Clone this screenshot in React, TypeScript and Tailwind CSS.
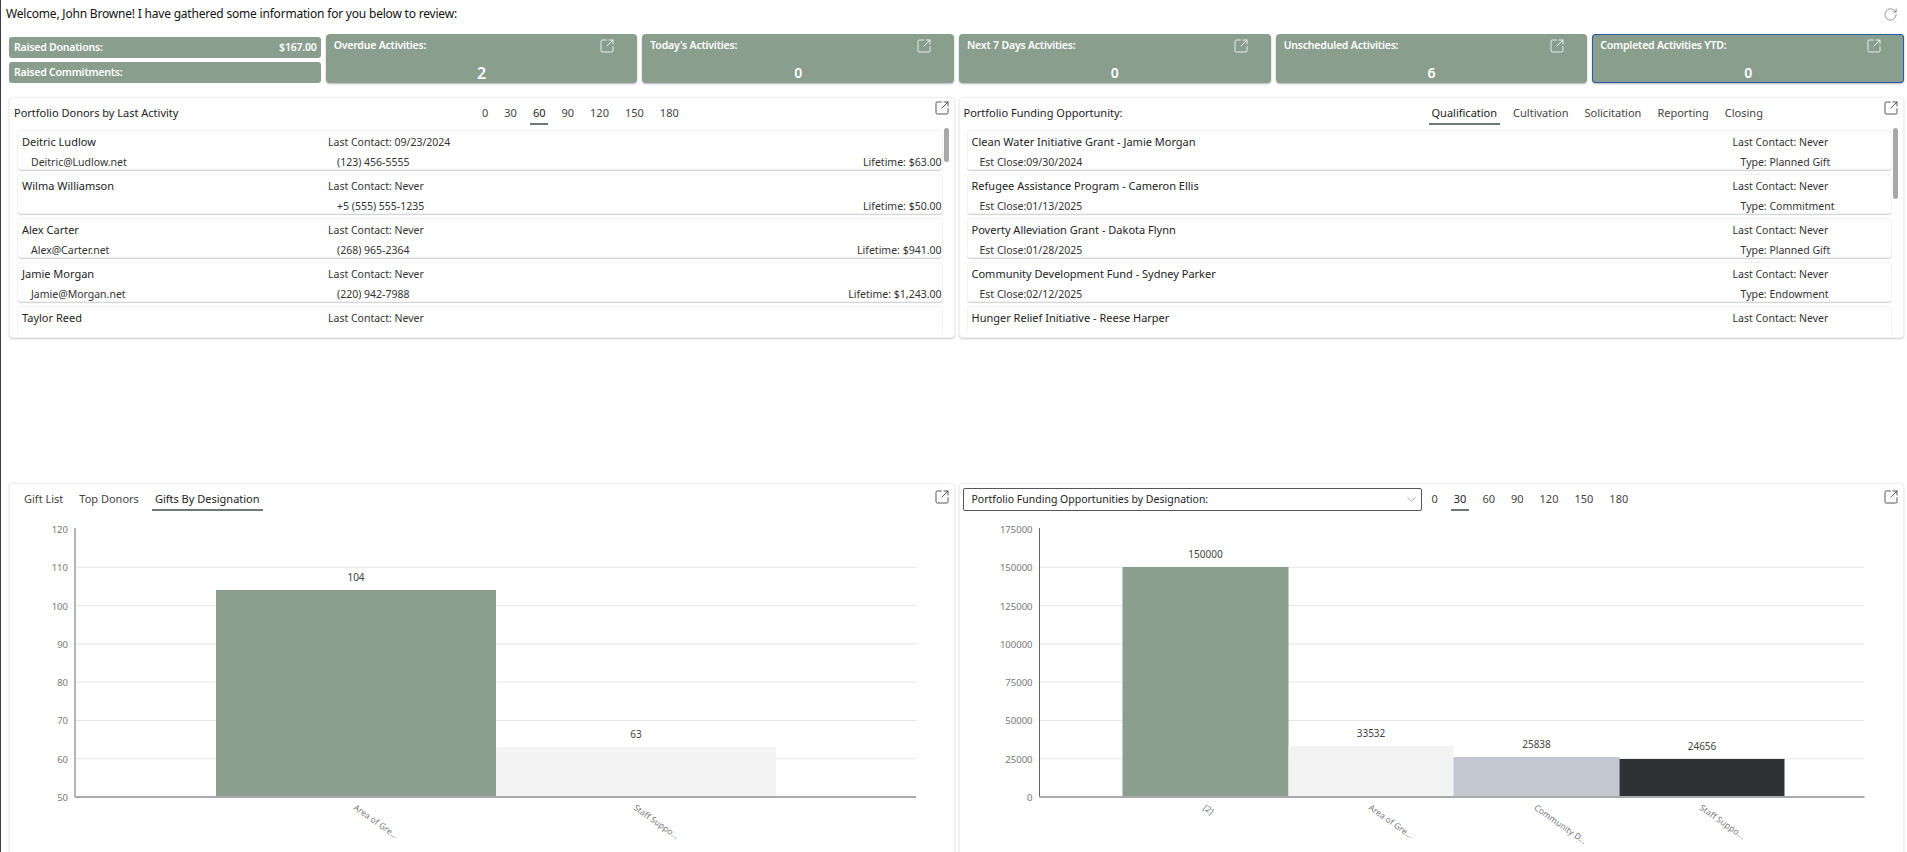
import { ChevronDown, RotateCw, SquareArrowOutUpRight } from 'lucide-react'

const activityTiles = [
  { label: 'Overdue Activities:', value: '2', big: true },
  { label: "Today's Activities:", value: '0' },
  { label: 'Next 7 Days Activities:', value: '0' },
  { label: 'Unscheduled Activities:', value: '6' },
  { label: 'Completed Activities YTD:', value: '0', focused: true },
]

const donors = [
  { name: 'Deitric Ludlow', contact: '09/23/2024', email: 'Deitric@Ludlow.net', phone: '(123) 456-5555', lifetime: '$63.00' },
  { name: 'Wilma Williamson', contact: 'Never', email: '', phone: '+5 (555) 555-1235', lifetime: '$50.00' },
  { name: 'Alex Carter', contact: 'Never', email: 'Alex@Carter.net', phone: '(268) 965-2364', lifetime: '$941.00' },
  { name: 'Jamie Morgan', contact: 'Never', email: 'Jamie@Morgan.net', phone: '(220) 942-7988', lifetime: '$1,243.00' },
  { name: 'Taylor Reed', contact: 'Never', email: '', phone: '', lifetime: '' },
]

const opportunities = [
  { name: 'Clean Water Initiative Grant - Jamie Morgan', close: '09/30/2024', type: 'Planned Gift' },
  { name: 'Refugee Assistance Program - Cameron Ellis', close: '01/13/2025', type: 'Commitment' },
  { name: 'Poverty Alleviation Grant - Dakota Flynn', close: '01/28/2025', type: 'Planned Gift' },
  { name: 'Community Development Fund - Sydney Parker', close: '02/12/2025', type: 'Endowment' },
  { name: 'Hunger Relief Initiative - Reese Harper', close: '', type: '' },
]

const dayTabs = ['0', '30', '60', '90', '120', '150', '180']
const stageTabs = ['Qualification', 'Cultivation', 'Solicitation', 'Reporting', 'Closing']

const Tabs = ({ items, active }: { items: string[]; active: string }) => (
  <div className="flex gap-[10px]">
    {items.map((item) => (
      <span
        key={item}
        className={`h-[23px] px-[3px] pt-[3px] text-[11px] leading-[16px] ${
          item === active ? 'border-b-2 border-[#6b7a72] text-[#222]' : 'text-[#444]'
        }`}
      >
        {item}
      </span>
    ))}
  </div>
)

const OpenIcon = ({ className = '' }: { className?: string }) => (
  <SquareArrowOutUpRight size={16} strokeWidth={1.25} className={className} />
)

const Panel = ({ className = '', children }: { className?: string; children: React.ReactNode }) => (
  <section className={`relative rounded-[4px] border border-[#f0f0f0] bg-white shadow-[0_1px_2px_rgba(0,0,0,0.2)] ${className}`}>
    {children}
  </section>
)

const Scrollbar = ({ height }: { height: string }) => (
  <div className={`absolute right-[5px] top-[30px] w-[5px] rounded-full bg-[#a8a8a8] ${height}`} />
)

const Row = ({ children }: { children: React.ReactNode }) => (
  <div className="mb-1 h-10 shrink-0 rounded-[4px] border border-[#f2f2f2] pl-1 pt-px text-[10.5px] leading-5 text-[#333] shadow-[0_1px_1px_rgba(0,0,0,0.18)]">
    {children}
  </div>
)

const DonorList = () => (
  <div className="h-[204px] overflow-hidden">
    {donors.map((d) => (
      <Row key={d.name}>
        <div className="flex">
          <span className="w-[306px] text-[11px] text-[#222]">{d.name}</span>
          <span>Last Contact: {d.contact}</span>
        </div>
        <div className="flex">
          <span className="w-[306px] pl-[9px]">{d.email}</span>
          <span className="pl-[9px]">{d.phone}</span>
          <span className="ml-auto">Lifetime: {d.lifetime}</span>
        </div>
      </Row>
    ))}
  </div>
)

const OpportunityList = () => (
  <div className="h-[204px] overflow-hidden">
    {opportunities.map((o) => (
      <Row key={o.name}>
        <div className="flex">
          <span className="w-[761px] text-[11px] text-[#222]">{o.name}</span>
          <span>Last Contact: Never</span>
        </div>
        {o.close && (
          <div className="flex">
            <span className="w-[761px] pl-2">Est Close:{o.close}</span>
            <span className="pl-2">Type: {o.type}</span>
          </div>
        )}
      </Row>
    ))}
  </div>
)

type ChartProps = {
  left: number
  width: number
  axisX: number
  axisEnd: number
  axisClass: string
  ticks: string[]
  bars: { x: number; w: number; top: number; color: string; value: string; label: string }[]
}

// numbers below are page coordinates, the viewBox shifts them into the panel
const BarChart = ({ left, width, axisX, axisEnd, axisClass, ticks, bars }: ChartProps) => {
  const top = 529
  const base = 797
  const step = (base - top) / (ticks.length - 1)
  return (
    <svg width={width} height={336} viewBox={`${left} 516 ${width} 336`} className="block">
      {ticks.map((t, i) => {
        const y = top + i * step
        return (
          <g key={t}>
            {i > 0 && i < ticks.length - 1 && <line x1={axisX} x2={axisEnd} y1={y} y2={y} stroke="#e6e6e6" />}
            <text x={axisX - 7} y={y + 4} textAnchor="end" fontSize={9.5} fill="#777">
              {t}
            </text>
          </g>
        )
      })}
      {bars.map((b) => (
        <g key={b.label}>
          <rect x={b.x} y={b.top} width={b.w} height={base - b.top} fill={b.color} />
          <text x={b.x + b.w / 2} y={b.top - 9} textAnchor="middle" fontSize={10} fill="#444">
            {b.value}
          </text>
          <text
            x={b.x + b.w / 2 - 3}
            y={809}
            fontSize={8.5}
            fill="#777"
            transform={`rotate(35 ${b.x + b.w / 2 - 3} 809)`}
          >
            {b.label}
          </text>
        </g>
      ))}
      <line x1={axisX} x2={axisX} y1={top - 1} y2={base} className={axisClass} />
      <line x1={axisX} x2={axisEnd} y1={base} y2={base} stroke="#a9a9a9" strokeWidth={2} />
    </svg>
  )
}

const App = () => (
  <div className="h-[852px] overflow-hidden border-l border-[#3c3c48] bg-white font-['Noto_Sans',sans-serif] text-[11px] text-[#333]">
    <header className="flex h-[34px] items-center justify-between pb-[6px] pl-[5px] pr-[9px]">
      <h1 className="text-[12px] font-normal tracking-[-0.2px] text-[#111]">
        Welcome, John Browne! I have gathered some information for you below to review:
      </h1>
      <RotateCw size={15} strokeWidth={1} className="text-[#555]" />
    </header>

    <div className="grid h-[48px] grid-cols-6 gap-[5px] pl-2 pr-[3px]">
      <div className="flex flex-col justify-end gap-1 text-[10.5px] font-semibold tracking-[-0.2px] text-white">
        <div className="flex h-[21px] items-center justify-between rounded-[3px] bg-[#8a9e8d] pl-[5px] pr-1">
          <span>Raised Donations:</span>
          <span>$167.00</span>
        </div>
        <div className="flex h-[21px] items-center rounded-[3px] bg-[#8a9e8d] pl-[5px]">Raised Commitments:</div>
      </div>
      {activityTiles.map((tile) => (
        <div
          key={tile.label}
          className={`rounded-[4px] bg-[#8a9e8d] pl-2 pr-[22px] text-white shadow-[0_1px_2px_rgba(0,0,0,0.3)] ${
            tile.focused ? 'ring-1 ring-inset ring-[#2a5ca8]' : ''
          }`}
        >
          <div className="flex h-6 items-center justify-between text-[10.5px] font-semibold tracking-[-0.2px]">
            <span>{tile.label}</span>
            <OpenIcon className="text-white" />
          </div>
          <div className={`-mr-[14px] mt-[5px] text-center font-semibold leading-5 ${tile.big ? 'text-[16px]' : 'text-[14px]'}`}>
            {tile.value}
          </div>
        </div>
      ))}
    </div>

    <div className="mt-[15px] grid h-[241px] grid-cols-2 gap-1 pl-2 pr-[3px]">
      <Panel className="pl-[7px] pr-[11px]">
        <div className="flex h-8 items-start pt-1">
          <span className="-ml-[3px] w-[465px] pt-[3px] leading-[16px] text-[#222]">Portfolio Donors by Last Activity</span>
          <Tabs items={dayTabs} active="60" />
          <OpenIcon className="absolute right-[4px] top-[2px] text-[#333]" />
        </div>
        <DonorList />
        <Scrollbar height="h-[34px]" />
      </Panel>
      <Panel className="pl-[7px] pr-[11px]">
        <div className="flex h-8 items-start pt-1">
          <span className="-ml-[3px] w-[465px] pt-[3px] leading-[16px] text-[#222]">Portfolio Funding Opportunity:</span>
          <Tabs items={stageTabs} active="Qualification" />
          <OpenIcon className="absolute right-[4px] top-[2px] text-[#333]" />
        </div>
        <OpportunityList />
        <Scrollbar height="h-[71px]" />
      </Panel>
    </div>

    <div className="mt-[145px] grid h-[400px] grid-cols-2 gap-1 pl-2 pr-[3px]">
      <Panel>
        <div className="flex h-8 items-start pl-[11px] pt-1">
          <Tabs items={['Gift List', 'Top Donors', 'Gifts By Designation']} active="Gifts By Designation" />
          <OpenIcon className="absolute right-[4px] top-[5px] text-[#333]" />
        </div>
        <BarChart
          left={10}
          width={943}
          axisX={75}
          axisEnd={916}
          axisClass="stroke-[#b5b5b5] stroke-2"
          ticks={['120', '110', '100', '90', '80', '70', '60', '50']}
          bars={[
            { x: 216, w: 280, top: 590, color: '#8a9e8d', value: '104', label: 'Area of Gre...' },
            { x: 496, w: 280, top: 747, color: '#f3f3f3', value: '63', label: 'Staff Suppo...' },
          ]}
        />
      </Panel>
      <Panel>
        <div className="flex h-8 items-start gap-[7px] pl-[3px] pt-1">
          <div className="flex h-[23px] w-[459px] items-center justify-between rounded-[2px] border border-[#555] pl-2 pr-[2px]">
            <span className="text-[10.5px] text-[#222]">Portfolio Funding Opportunities by Designation:</span>
            <ChevronDown size={15} strokeWidth={1} className="text-[#777]" />
          </div>
          <Tabs items={dayTabs} active="30" />
          <OpenIcon className="absolute right-[4px] top-[5px] text-[#333]" />
        </div>
        <BarChart
          left={959.5}
          width={943}
          axisX={1039}
          axisEnd={1864}
          axisClass="stroke-[#666] stroke-1"
          ticks={['175000', '150000', '125000', '100000', '75000', '50000', '25000', '0']}
          bars={[
            { x: 1122, w: 166, top: 567, color: '#8a9e8d', value: '150000', label: '[2]' },
            { x: 1288, w: 165, top: 746, color: '#f3f3f3', value: '33532', label: 'Area of Gre...' },
            { x: 1453, w: 166, top: 757, color: '#c3c7d0', value: '25838', label: 'Community D...' },
            { x: 1619, w: 165, top: 759, color: '#303135', value: '24656', label: 'Staff Suppo...' },
          ]}
        />
      </Panel>
    </div>
  </div>
)

export default App
